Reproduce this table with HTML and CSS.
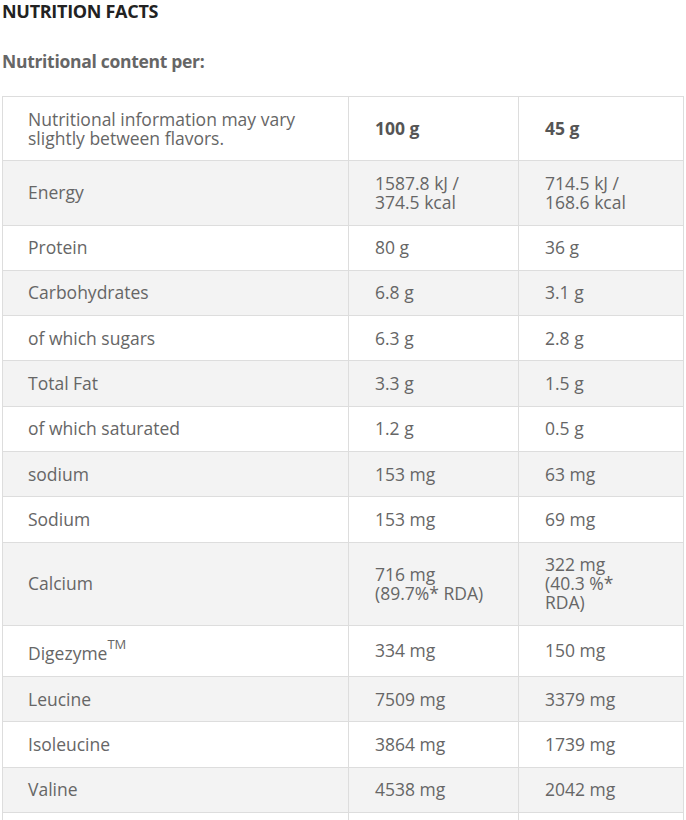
FILE: index.html
```html
<!DOCTYPE html>
<html lang="en">
<head>
<meta charset="utf-8">
<title>Nutrition Facts</title>
<link rel="stylesheet" href="styles.css">
</head>
<body>
<div class="page">
  <h2 class="title">NUTRITION FACTS</h2>
  <p class="subtitle">Nutritional content per:</p>
  <table class="facts">
    <colgroup>
      <col class="c1"><col class="c2"><col class="c3">
    </colgroup>
    <tbody>
      <tr class="head">
        <td>Nutritional information may vary slightly between flavors.</td>
        <td class="b">100 g</td>
        <td class="b">45 g</td>
      </tr>
      <tr class="alt"><td>Energy</td><td>1587.8 kJ /<br>374.5 kcal</td><td>714.5 kJ /<br>168.6 kcal</td></tr>
      <tr><td>Protein</td><td>80 g</td><td>36 g</td></tr>
      <tr class="alt"><td>Carbohydrates</td><td>6.8 g</td><td>3.1 g</td></tr>
      <tr><td>of which sugars</td><td>6.3 g</td><td>2.8 g</td></tr>
      <tr class="alt"><td>Total Fat</td><td>3.3 g</td><td>1.5 g</td></tr>
      <tr><td>of which saturated</td><td>1.2 g</td><td>0.5 g</td></tr>
      <tr class="alt"><td>sodium</td><td>153 mg</td><td>63 mg</td></tr>
      <tr><td>Sodium</td><td>153 mg</td><td>69 mg</td></tr>
      <tr class="alt"><td>Calcium</td><td>716 mg<br>(89.7%* RDA)</td><td>322 mg<br>(40.3 %*<br>RDA)</td></tr>
      <tr><td>Digezyme<sup>TM</sup></td><td>334 mg</td><td>150 mg</td></tr>
      <tr class="alt"><td>Leucine</td><td>7509 mg</td><td>3379 mg</td></tr>
      <tr><td>Isoleucine</td><td>3864 mg</td><td>1739 mg</td></tr>
      <tr class="alt"><td>Valine</td><td>4538 mg</td><td>2042 mg</td></tr>
      <tr><td>&nbsp;</td><td>&nbsp;</td><td>&nbsp;</td></tr>
    </tbody>
  </table>
</div>
</body>
</html>
```

FILE: styles.css
```css
html, body {
  margin: 0;
  padding: 0;
  background: #ffffff;
}
body {
  font-family: "Open Sans", "Noto Sans", "Liberation Sans", sans-serif;
  color: #666666;
}
.page {
  padding: 0 2px;
}
.title {
  margin: 0;
  padding-top: 1px;
  font-size: 18px;
  line-height: 20px;
  font-weight: 700;
  color: #222222;
  letter-spacing: -0.3px;
}
.subtitle {
  margin: 30px 0 0 0;
  font-size: 17.5px;
  line-height: 20px;
  font-weight: 700;
  color: #666666;
  letter-spacing: -0.3px;
}
.facts {
  margin-top: 25px;
  width: 681px;
  border-collapse: collapse;
  table-layout: fixed;
  font-size: 17.5px;
  line-height: 19px;
}
.c1 { width: 346px; }
.c2 { width: 170px; }
.c3 { width: 165px; }
.facts td {
  border: 1px solid #dddddd;
  padding: 12.65px 14px 12.65px 26px;
  vertical-align: middle;
  color: #666666;
}
.facts td:first-child {
  padding-left: 25px;
}
.facts tr.alt td {
  background: #f3f3f3;
}
.facts td.b {
  font-weight: 700;
  color: #555555;
}
.facts sup {
  font-size: 13px;
  line-height: 13px;
  vertical-align: 11px;
}
```
